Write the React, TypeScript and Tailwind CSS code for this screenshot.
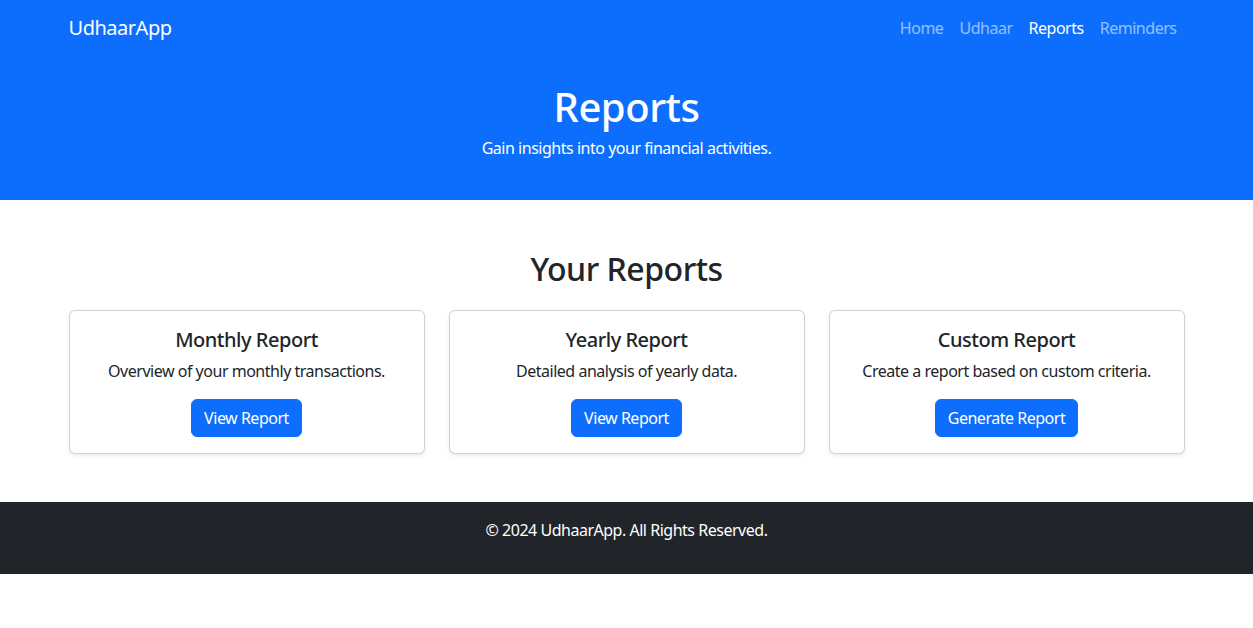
import React from 'react'

const navLinks = [
  { name: 'Home', active: false },
  { name: 'Udhaar', active: false },
  { name: 'Reports', active: true },
  { name: 'Reminders', active: false },
]

const reports = [
  { title: 'Monthly Report', text: 'Overview of your monthly transactions.', action: 'View Report' },
  { title: 'Yearly Report', text: 'Detailed analysis of yearly data.', action: 'View Report' },
  { title: 'Custom Report', text: 'Create a report based on custom criteria.', action: 'Generate Report' },
]

const ReportCard = ({ title, text, action }: { title: string; text: string; action: string }) => (
  <div className="flex flex-col items-center rounded-md border border-black/[0.175] bg-white p-4 text-center shadow-[0_2px_4px_rgba(0,0,0,0.075)]">
    <h5 className="mb-2 mt-px text-[20px] font-medium leading-[24px]">{title}</h5>
    <p className="mb-4 -mt-px text-[16px] leading-[24px]">{text}</p>
    <a href="#" className="rounded-md bg-[#0d6efd] px-3 py-[6px] text-[16px] leading-[24px] text-white border border-[#0d6efd]">
      {action}
    </a>
  </div>
)

export default function App() {
  return (
    <div className="min-h-screen bg-white tracking-[-0.03em] text-[#212529]" style={{ fontFamily: '"Noto Sans", "Open Sans", sans-serif' }}>
      <header className="bg-[#0d6efd] text-white">
        <nav className="mx-auto flex h-14 max-w-[1140px] items-center justify-between px-3">
          <a href="#" className="text-[20px] leading-[30px]">UdhaarApp</a>
          <ul className="flex">
            {navLinks.map((link) => (
              <li key={link.name}>
                <a href="#" className={`px-2 text-[16px] leading-[24px] ${link.active ? 'text-white' : 'text-white/55'}`}>
                  {link.name}
                </a>
              </li>
            ))}
          </ul>
        </nav>
        <div className="pt-[27px] pb-[24px] text-center">
          <h1 className="mb-[5px] text-[40px] font-medium leading-[48px]">Reports</h1>
          <p className="mb-4 text-[16px] leading-[24px]">Gain insights into your financial activities.</p>
        </div>
      </header>

      <section className="mx-auto max-w-[1140px] px-3 pt-[50px] pb-12">
        <h2 className="mb-[22px] text-center text-[32px] font-medium leading-[38px]">Your Reports</h2>
        <div className="grid grid-cols-3 gap-6">
          {reports.map((r) => (
            <ReportCard key={r.title} {...r} />
          ))}
        </div>
      </section>

      <footer className="bg-[#212529] py-4 text-center text-white">
        <p className="mb-4 text-[16px] leading-[24px]">&copy; 2024 UdhaarApp. All Rights Reserved.</p>
      </footer>
    </div>
  )
}
